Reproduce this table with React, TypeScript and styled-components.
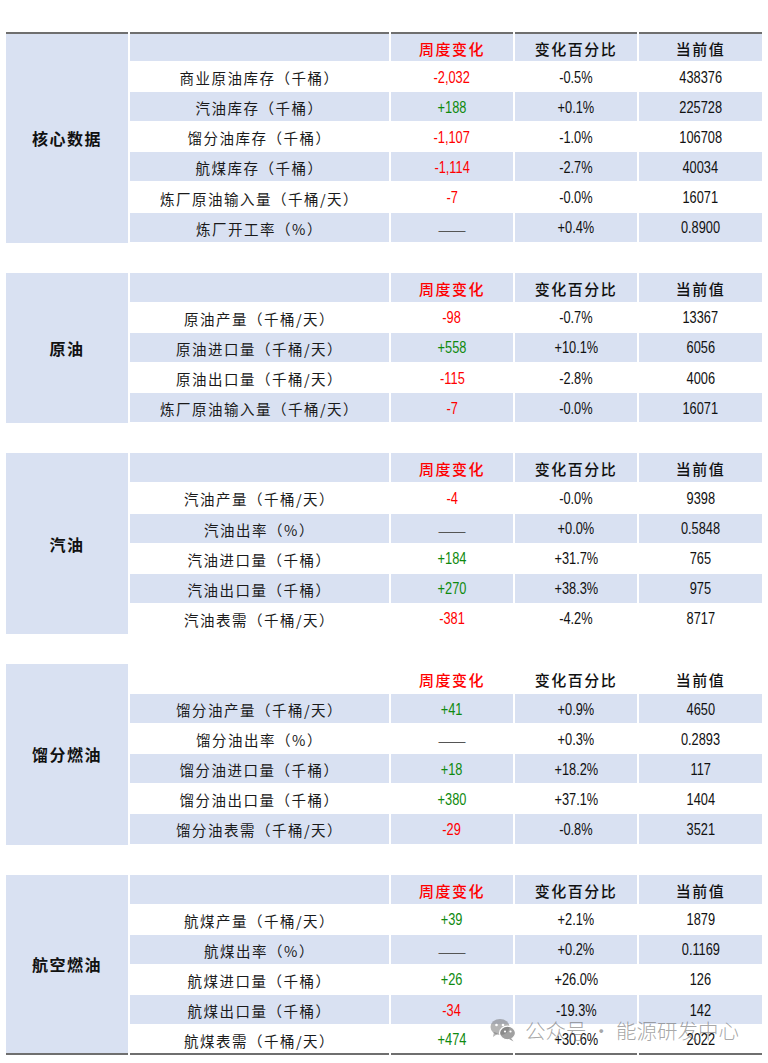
import * as React from "react";
import styled, { createGlobalStyle } from "styled-components";

const ROW = 30.1;
const BLUE = "#D9E1F2";

const GlobalStyle = createGlobalStyle`
  html, body {
    margin: 0;
    padding: 0;
    background: #ffffff;
  }
  body {
    font-family: "Noto Sans CJK SC", "Liberation Sans", sans-serif;
    color: #111;
  }
`;

const Page = styled.div`
  position: relative;
  width: 768px;
  height: 1063px;
  padding: 32px 6px 0 6px;
  box-sizing: border-box;
  overflow: hidden;
`;

const Stack = styled.div`
  display: flex;
  flex-direction: column;
  gap: ${ROW}px;
`;

const Section = styled.div<{ $rows: number }>`
  display: grid;
  grid-template-columns: 122px 259px 122px 122px 123px;
  grid-template-rows: repeat(${p => p.$rows}, ${ROW}px);
  column-gap: 2px;
`;

const Edge = styled.div<{ $top?: boolean; $bottom?: boolean }>`
  box-sizing: border-box;
  border-top: ${p => (p.$top ? "2px solid #6f6f6f" : "0")};
  border-bottom: ${p => (p.$bottom ? "2px solid #6f6f6f" : "0")};
`;

const GroupCell = styled(Edge)<{ $span: number }>`
  grid-row: span ${p => p.$span};
  background: ${BLUE};
  display: flex;
  align-items: center;
  justify-content: center;
  font-size: 16px;
  font-weight: 700;
  letter-spacing: 1.5px;
`;

const Cell = styled(Edge)<{ $shade: boolean }>`
  background: ${p => (p.$shade ? BLUE : "#ffffff")};
  border-bottom: ${p => (p.$bottom ? "2px solid #6f6f6f" : "1px solid #ffffff")};
  display: flex;
  align-items: center;
  justify-content: center;
  padding-top: 2px;
  white-space: nowrap;
  overflow: hidden;
`;

const HeadText = styled.span<{ $red?: boolean }>`
  font-size: 15px;
  font-weight: 500;
  letter-spacing: 1.5px;
  color: ${p => (p.$red ? "#ff0000" : "#111")};
`;

const LabelText = styled.span`
  font-size: 14.5px;
  font-weight: 400;
  letter-spacing: 1.5px;
  color: #1a1a1a;
`;

const NumText = styled.span<{ $tone?: "red" | "green" }>`
  display: inline-block;
  font-family: "Liberation Sans", sans-serif;
  font-size: 16px;
  transform: scaleX(0.8);
  color: ${p => (p.$tone === "red" ? "#ff0000" : p.$tone === "green" ? "#0f8a0f" : "#111")};
`;

const Dash = styled.span`
  font-size: 17px;
  color: #555;
`;

const Watermark = styled.div`
  position: absolute;
  left: 490px;
  top: 1015px;
  display: flex;
  align-items: center;
  gap: 9px;
  pointer-events: none;
  color: rgba(110, 110, 110, 0.62);
  font-size: 20.5px;
  font-weight: 300;
`;

type Row = [string, string, string, string];

interface Block {
  name: string;
  shadeHeader: boolean;
  rows: Row[];
}

const blocks: Block[] = [
  {
    name: "核心数据",
    shadeHeader: true,
    rows: [
      ["商业原油库存（千桶）", "-2,032", "-0.5%", "438376"],
      ["汽油库存（千桶）", "+188", "+0.1%", "225728"],
      ["馏分油库存（千桶）", "-1,107", "-1.0%", "106708"],
      ["航煤库存（千桶）", "-1,114", "-2.7%", "40034"],
      ["炼厂原油输入量（千桶/天）", "-7", "-0.0%", "16071"],
      ["炼厂开工率（%）", "", "+0.4%", "0.8900"],
    ],
  },
  {
    name: "原油",
    shadeHeader: true,
    rows: [
      ["原油产量（千桶/天）", "-98", "-0.7%", "13367"],
      ["原油进口量（千桶/天）", "+558", "+10.1%", "6056"],
      ["原油出口量（千桶/天）", "-115", "-2.8%", "4006"],
      ["炼厂原油输入量（千桶/天）", "-7", "-0.0%", "16071"],
    ],
  },
  {
    name: "汽油",
    shadeHeader: true,
    rows: [
      ["汽油产量（千桶/天）", "-4", "-0.0%", "9398"],
      ["汽油出率（%）", "", "+0.0%", "0.5848"],
      ["汽油进口量（千桶）", "+184", "+31.7%", "765"],
      ["汽油出口量（千桶）", "+270", "+38.3%", "975"],
      ["汽油表需（千桶/天）", "-381", "-4.2%", "8717"],
    ],
  },
  {
    name: "馏分燃油",
    shadeHeader: false,
    rows: [
      ["馏分油产量（千桶/天）", "+41", "+0.9%", "4650"],
      ["馏分油出率（%）", "", "+0.3%", "0.2893"],
      ["馏分油进口量（千桶）", "+18", "+18.2%", "117"],
      ["馏分油出口量（千桶）", "+380", "+37.1%", "1404"],
      ["馏分油表需（千桶/天）", "-29", "-0.8%", "3521"],
    ],
  },
  {
    name: "航空燃油",
    shadeHeader: true,
    rows: [
      ["航煤产量（千桶/天）", "+39", "+2.1%", "1879"],
      ["航煤出率（%）", "", "+0.2%", "0.1169"],
      ["航煤进口量（千桶）", "+26", "+26.0%", "126"],
      ["航煤出口量（千桶）", "-34", "-19.3%", "142"],
      ["航煤表需（千桶/天）", "+474", "+30.6%", "2022"],
    ],
  },
];

function tone(v: string): "red" | "green" | undefined {
  if (v.startsWith("-")) return "red";
  if (v.startsWith("+")) return "green";
  return undefined;
}

function WeChatIcon() {
  return (
    <svg width="26" height="24" viewBox="0 0 26 24">
      <ellipse cx="10" cy="9" rx="9.5" ry="8" fill="rgba(120,120,120,0.55)" />
      <path d="M4 14 L3 19 L8 15.5 Z" fill="rgba(120,120,120,0.55)" />
      <ellipse cx="17.5" cy="15" rx="8" ry="6.8" fill="rgba(120,120,120,0.7)" stroke="#fff" strokeWidth="1.2" />
      <path d="M21 20 L23.5 23.5 L19 21 Z" fill="rgba(120,120,120,0.7)" />
      <circle cx="6.5" cy="7" r="1.3" fill="#fff" />
      <circle cx="13" cy="7" r="1.3" fill="#fff" />
      <circle cx="15" cy="13.5" r="1.1" fill="#fff" />
      <circle cx="20.5" cy="13.5" r="1.1" fill="#fff" />
    </svg>
  );
}

function SectionTable({ block, first, last }: { block: Block; first: boolean; last: boolean }) {
  const total = block.rows.length + 1;
  return (
    <Section $rows={total}>
      <GroupCell $span={total} $top={first} $bottom={last}>
        {block.name}
      </GroupCell>
      <Cell $shade={block.shadeHeader} $top={first} />
      <Cell $shade={block.shadeHeader} $top={first}>
        <HeadText $red>周度变化</HeadText>
      </Cell>
      <Cell $shade={block.shadeHeader} $top={first}>
        <HeadText>变化百分比</HeadText>
      </Cell>
      <Cell $shade={block.shadeHeader} $top={first}>
        <HeadText>当前值</HeadText>
      </Cell>
      {block.rows.map((r, i) => {
        const shade = block.shadeHeader ? i % 2 === 1 : i % 2 === 0;
        const isLast = last && i === block.rows.length - 1;
        return (
          <React.Fragment key={r[0] + i}>
            <Cell $shade={shade} $bottom={isLast}>
              <LabelText>{r[0]}</LabelText>
            </Cell>
            <Cell $shade={shade} $bottom={isLast}>
              {r[1] ? <NumText $tone={tone(r[1])}>{r[1]}</NumText> : <Dash>——</Dash>}
            </Cell>
            <Cell $shade={shade} $bottom={isLast}>
              <NumText>{r[2]}</NumText>
            </Cell>
            <Cell $shade={shade} $bottom={isLast}>
              <NumText>{r[3]}</NumText>
            </Cell>
          </React.Fragment>
        );
      })}
    </Section>
  );
}

export default function App() {
  return (
    <Page>
      <GlobalStyle />
      <Stack>
        {blocks.map((b, i) => (
          <SectionTable key={b.name} block={b} first={i === 0} last={i === blocks.length - 1} />
        ))}
      </Stack>
      <Watermark>
        <WeChatIcon />
        <span>公众号 · 能源研发中心</span>
      </Watermark>
    </Page>
  );
}
